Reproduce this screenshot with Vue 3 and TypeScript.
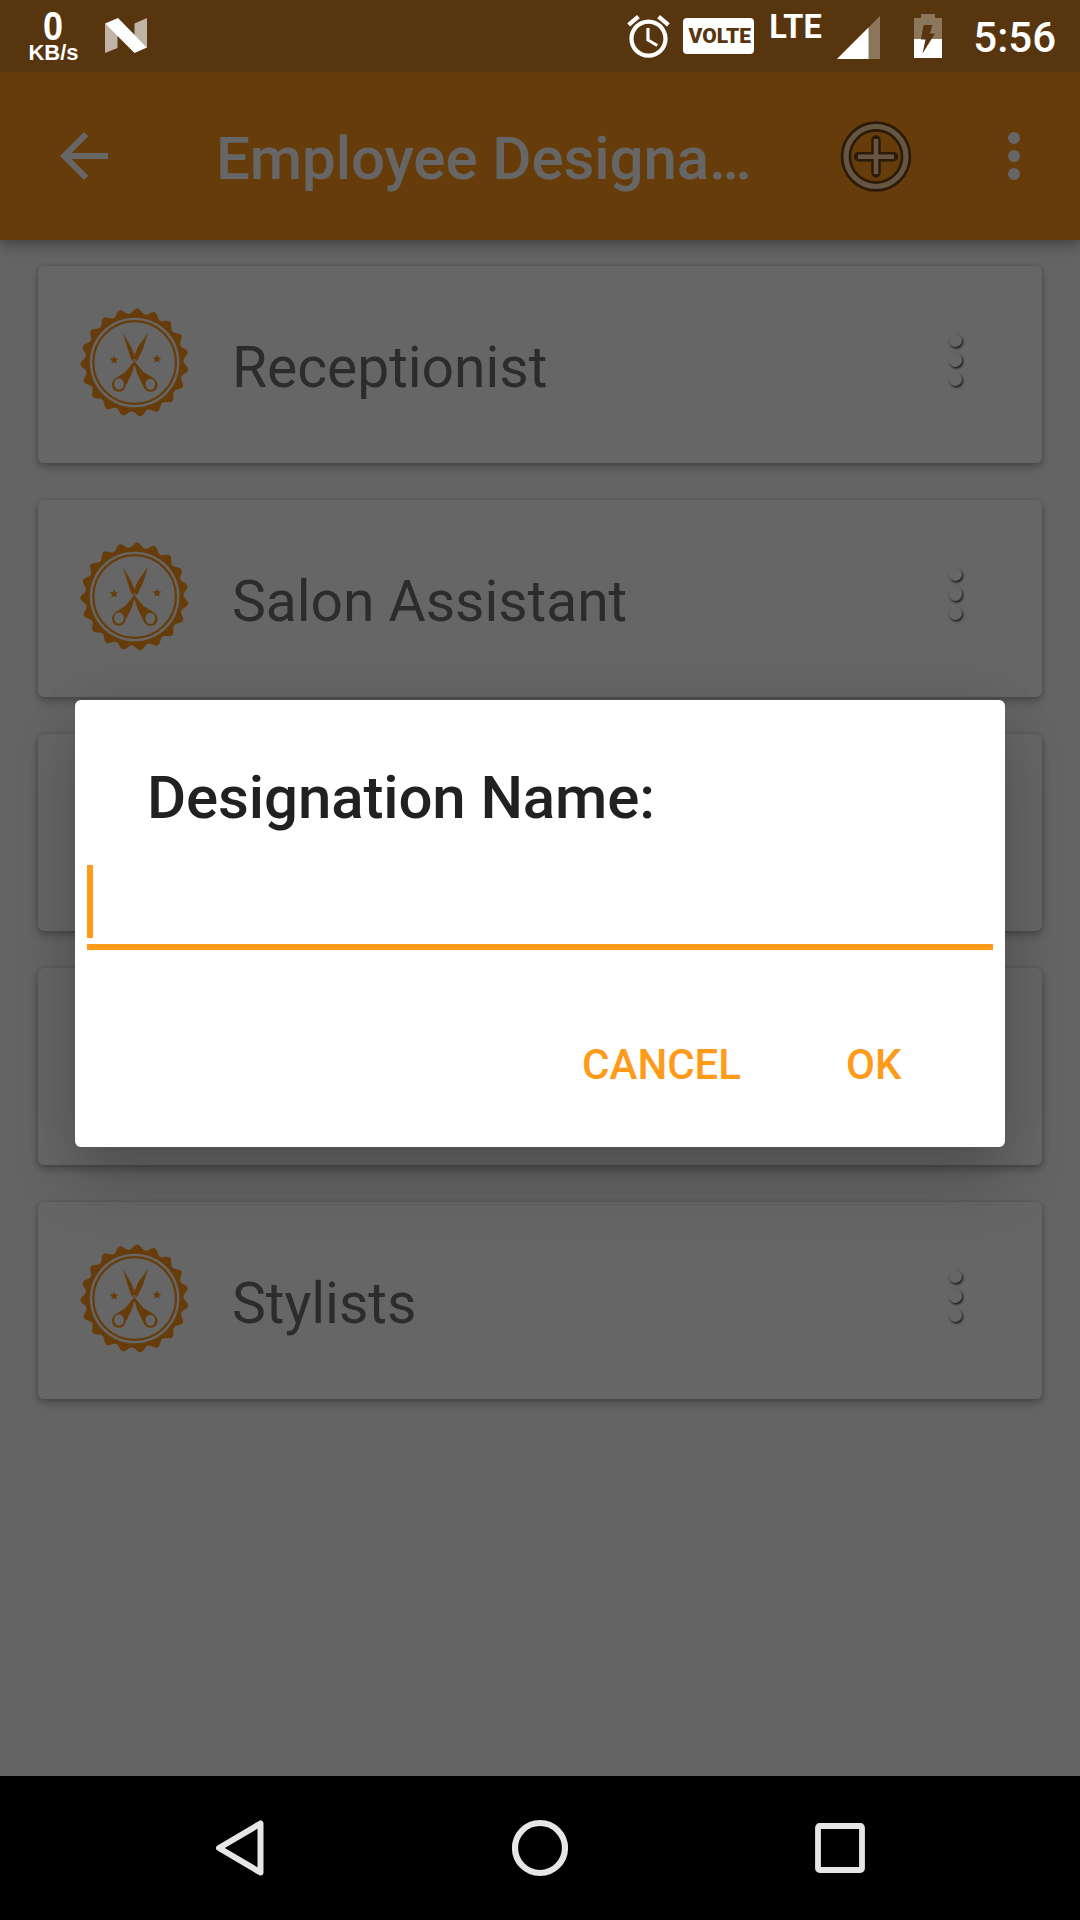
<script setup lang="ts">
interface Designation {
  id: number
  name?: string
}

const designations: Designation[] = [
  { id: 1, name: 'Receptionist' },
  { id: 2, name: 'Salon Assistant' },
  { id: 3 },
  { id: 4 },
  { id: 5, name: 'Stylists' },
]

// Scalloped rim of the badge: 19 rounded teeth around the centre.
function rimPath(cx: number, cy: number): string {
  const teeth = 19
  const steps = teeth * 14
  const points: string[] = []
  for (let i = 0; i < steps; i++) {
    const a = (i / steps) * Math.PI * 2
    const wave = Math.pow((1 + Math.cos(a * teeth)) / 2, 1.1)
    const r = 147 + 15.5 * wave
    const t = a + (3 * Math.PI) / 180
    points.push(`${(cx + r * Math.sin(t)).toFixed(1)} ${(cy - r * Math.cos(t)).toFixed(1)}`)
  }
  return `M${points.join('L')}Z`
}

function starPath(cx: number, cy: number, radius: number): string {
  const points: string[] = []
  for (let i = 0; i < 10; i++) {
    const r = i % 2 === 0 ? radius : radius * 0.45
    const t = (i * Math.PI) / 5
    points.push(`${(cx + r * Math.sin(t)).toFixed(1)} ${(cy - r * Math.cos(t)).toFixed(1)}`)
  }
  return `M${points.join('L')}Z`
}

const rim = rimPath(222.5, 215.5)
const stars = [starPath(161, 208, 14), starPath(290, 205, 14)]
</script>

<template>
  <div class="screen">
    <header class="status">
      <div class="speed">
        <span class="speed-value">0</span>
        <span class="speed-unit">KB/s</span>
      </div>
      <svg class="nougat" width="42" height="35" viewBox="0 0 42 35">
        <path d="M0 5.5 12.5 17.5V30L0 35ZM29.5 5.5 42 0V29.5L29.5 17Z" fill="#fff" fill-opacity=".63" />
        <path d="M0 5.5 13 0 42 29.5 29.5 35Z" fill="#fff" />
      </svg>
      <div class="status-right">
        <svg class="alarm" width="51" height="51" viewBox="0 0 24 24" fill="#fff">
          <path d="M22 5.72l-4.6-3.86-1.29 1.53 4.6 3.86L22 5.72zM7.88 3.39L6.6 1.86 2 5.71l1.29 1.53 4.59-3.85zM12.5 8H11v6l4.75 2.85.75-1.23-4-2.37V8zM12 4c-4.97 0-9 4.03-9 9s4.02 9 9 9c4.97 0 9-4.03 9-9s-4.03-9-9-9zm0 16c-3.87 0-7-3.13-7-7s3.13-7 7-7 7 3.13 7 7-3.13 7-7 7z" />
        </svg>
        <span class="volte">VOLTE</span>
        <span class="lte">LTE</span>
        <svg class="signal" width="43" height="43" viewBox="0 0 43 43" fill="#fff">
          <path d="M0 43 43 0V43Z" fill-opacity=".32" />
          <path d="M0 43 31.5 11.5V43Z" />
        </svg>
        <svg class="battery" width="28" height="44" viewBox="0 0 28 44">
          <path d="M7 0H21V4H28V25H0V4H7Z" fill="#fff" fill-opacity=".32" />
          <path d="M0 25H28V44H0Z" fill="#fff" />
          <path d="M9.5 11H18.5L15.8 19.5H21L8.5 39.5L11.5 25.5H7Z" fill="#56350f" />
        </svg>
        <span class="clock">5:56</span>
      </div>
    </header>

    <div class="toolbar">
      <svg class="back" width="72" height="72" viewBox="0 0 24 24" fill="#fff">
        <path d="M20 11H7.83l5.59-5.59L12 4l-8 8 8 8 1.41-1.41L7.83 13H20v-2z" />
      </svg>
      <h1 class="title">Employee Designa…</h1>
      <svg class="add" width="72" height="72" viewBox="0 0 72 72" fill="none">
        <g stroke="#6b430f" stroke-linejoin="round" stroke-linecap="round">
          <circle cx="36" cy="36.5" r="30" stroke-width="10.5" />
          <path d="M18.5 36.7H53.5M36 20V53" stroke-width="9.5" />
        </g>
        <g stroke="#ffd5a5">
          <circle cx="36" cy="36.5" r="30" stroke-width="5.2" />
          <path d="M18 36.7H54M36 19V54" stroke-width="4.6" />
        </g>
      </svg>
      <svg class="more" width="72" height="72" viewBox="0 0 72 72" fill="#fff">
        <circle cx="36" cy="18" r="6" />
        <circle cx="36" cy="36" r="6" />
        <circle cx="36" cy="54" r="6" />
      </svg>
    </div>

    <main class="list">
      <article v-for="item in designations" :key="item.id" class="card">
        <template v-if="item.name">
          <svg class="badge" width="109" height="109" viewBox="59 52 327 327">
            <path :d="rim" fill="#ff991a" />
            <circle cx="223" cy="215.5" r="134.5" fill="#fff" />
            <circle cx="223" cy="215.5" r="124" fill="none" stroke="#ff991a" stroke-width="6.5" />
            <path v-for="star in stars" :key="star" :d="star" fill="#ff991a" />
            <g fill="#ff991a">
              <path d="M187 126 213 170 227 204 219 214 211 202Z" />
              <path d="M263 126 249 172 232 207 225 214 219 202 233 168Z" />
              <path d="M221 212 198 240C185 254 157 260 155 281C155 312 193 308 196 285L214 250 224 216Z" />
              <path d="M223 212 246 240C259 254 290 260 292 281C292 312 254 308 248 285L231 250 220 216Z" />
            </g>
            <ellipse cx="176" cy="280" rx="14.5" ry="17" fill="#fff" />
            <ellipse cx="270" cy="281" rx="14.5" ry="17" fill="#fff" />
            <circle cx="222" cy="210" r="5" fill="#fff" />
            <circle cx="222" cy="210" r="3" fill="#ff991a" />
          </svg>
          <span class="name">{{ item.name }}</span>
          <span class="dots"><i></i><i></i><i></i></span>
        </template>
      </article>
    </main>

    <div class="scrim">
      <section class="dialog">
        <h2 class="dialog-title">Designation Name:</h2>
        <div class="field"><span class="caret"></span></div>
        <div class="actions">
          <button class="action">CANCEL</button>
          <button class="action">OK</button>
        </div>
      </section>
    </div>

    <nav class="navbar">
      <svg width="50" height="58" viewBox="0 0 50 58">
        <path d="M4 29 45.5 4.5V53.5Z" fill="none" stroke="#e6e6e6" stroke-width="6" stroke-linejoin="round" />
      </svg>
      <svg width="58" height="58" viewBox="0 0 58 58">
        <circle cx="29" cy="29" r="25" fill="none" stroke="#e6e6e6" stroke-width="6.2" />
      </svg>
      <svg width="50" height="50" viewBox="0 0 50 50">
        <rect x="3" y="3" width="44" height="44" rx="1.5" fill="none" stroke="#e6e6e6" stroke-width="5.8" />
      </svg>
    </nav>
  </div>
</template>

<style>
body {
  margin: 0;
}
</style>

<style scoped>
.screen {
  position: relative;
  display: flex;
  flex-direction: column;
  width: 1080px;
  height: 1920px;
  overflow: hidden;
  background: #fafafa;
  font-family: Roboto, "Noto Sans", sans-serif;
}

.status {
  position: relative;
  z-index: 3;
  display: flex;
  flex: none;
  height: 72px;
  background: #56350f;
  color: #fff;
}

.speed {
  display: flex;
  flex-direction: column;
  align-items: center;
  width: 50px;
  margin-left: 28.5px;
  font-family: "Liberation Sans", sans-serif;
  font-weight: 700;
}

.speed-value {
  margin-top: 11px;
  font-size: 40px;
  line-height: 30px;
  transform: scaleX(0.9);
}

.speed-unit {
  margin-top: 2px;
  font-size: 22px;
  line-height: 20px;
}

.nougat {
  margin: 18px 0 0 26.5px;
}

.status-right {
  display: flex;
  align-items: flex-start;
  margin-left: auto;
  padding-right: 24px;
}

.alarm {
  margin-top: 11px;
}

.volte {
  box-sizing: border-box;
  width: 71px;
  height: 36px;
  margin: 18px 0 0 9px;
  padding-left: 2px;
  border-radius: 4px;
  background: #fff;
  color: #56350f;
  font-size: 21px;
  font-weight: 900;
  line-height: 36px;
  text-align: center;
}

.lte {
  width: 54px;
  margin: 9px 0 0 15px;
  font-size: 32.5px;
  font-weight: 700;
  line-height: 37px;
}

.signal {
  margin: 16px 0 0 14px;
}

.battery {
  margin: 14px 0 0 34px;
}

.clock {
  margin-left: 31px;
  font-size: 42px;
  font-weight: 500;
  line-height: 75px;
}

.toolbar {
  position: relative;
  z-index: 1;
  display: flex;
  flex: none;
  align-items: center;
  box-sizing: border-box;
  height: 168px;
  padding: 0 30px 0 48px;
  background: #ff991a;
  box-shadow: 0 5px 14px rgba(0, 0, 0, 0.3), 0 2px 5px rgba(0, 0, 0, 0.1);
  color: #fff;
}

.title {
  margin: 6px 0 0 96px;
  font-size: 60px;
  font-weight: 500;
  letter-spacing: -0.07px;
  line-height: 72px;
  white-space: nowrap;
}

.add {
  margin-left: auto;
}

.more {
  margin-left: 66px;
}

.list {
  display: flex;
  flex-direction: column;
  gap: 37px;
  padding: 26px 38px 0;
}

.card {
  display: flex;
  align-items: center;
  box-sizing: border-box;
  height: 197px;
  padding: 0 80px 0 41.5px;
  border-radius: 6px;
  background: #fff;
  box-shadow: 0 4px 9px rgba(0, 0, 0, 0.28), 0 0 4px rgba(0, 0, 0, 0.14);
}

.badge {
  margin-bottom: 5px;
}

.name {
  margin: 7px 0 0 43.5px;
  color: #6e6e6e;
  font-size: 57px;
  letter-spacing: -0.05px;
  line-height: 68px;
}

.dots {
  display: flex;
  flex-direction: column;
  gap: 6px;
  margin: 0 0 9px auto;
}

.dots i {
  width: 13.5px;
  height: 13.5px;
  border-radius: 50%;
  background: #fff;
  box-shadow: 1px 1.5px 2.5px rgba(0, 0, 0, 0.8);
}

.scrim {
  position: absolute;
  z-index: 2;
  inset: 0;
  display: flex;
  align-items: center;
  justify-content: center;
  padding: 72px 0 145px;
  background: rgba(0, 0, 0, 0.6);
}

.dialog {
  display: flex;
  flex-direction: column;
  box-sizing: border-box;
  width: 930px;
  height: 447px;
  border-radius: 6px;
  background: #fff;
  box-shadow: 0 34px 62px rgba(0, 0, 0, 0.2), 0 0 50px rgba(0, 0, 0, 0.06);
}

.dialog-title {
  margin: 61px 72px 0;
  color: #212121;
  font-size: 60px;
  font-weight: 500;
  letter-spacing: -0.12px;
  line-height: 74px;
}

.field {
  height: 79px;
  margin: 30px 12px 0;
  border-bottom: 6px solid #ff9b19;
}

.caret {
  display: block;
  width: 6px;
  height: 73px;
  background: #ff9b19;
}

.actions {
  display: flex;
  justify-content: flex-end;
  gap: 105px;
  margin: 89px 103.5px 0 0;
}

.action {
  padding: 0;
  border: 0;
  background: none;
  color: #ff9b19;
  font: 500 42px/52px Roboto, sans-serif;
}

.navbar {
  position: relative;
  z-index: 3;
  display: flex;
  align-items: center;
  justify-content: space-between;
  flex: none;
  box-sizing: border-box;
  height: 144px;
  margin-top: auto;
  padding: 0 215px;
  background: #000;
}
</style>
